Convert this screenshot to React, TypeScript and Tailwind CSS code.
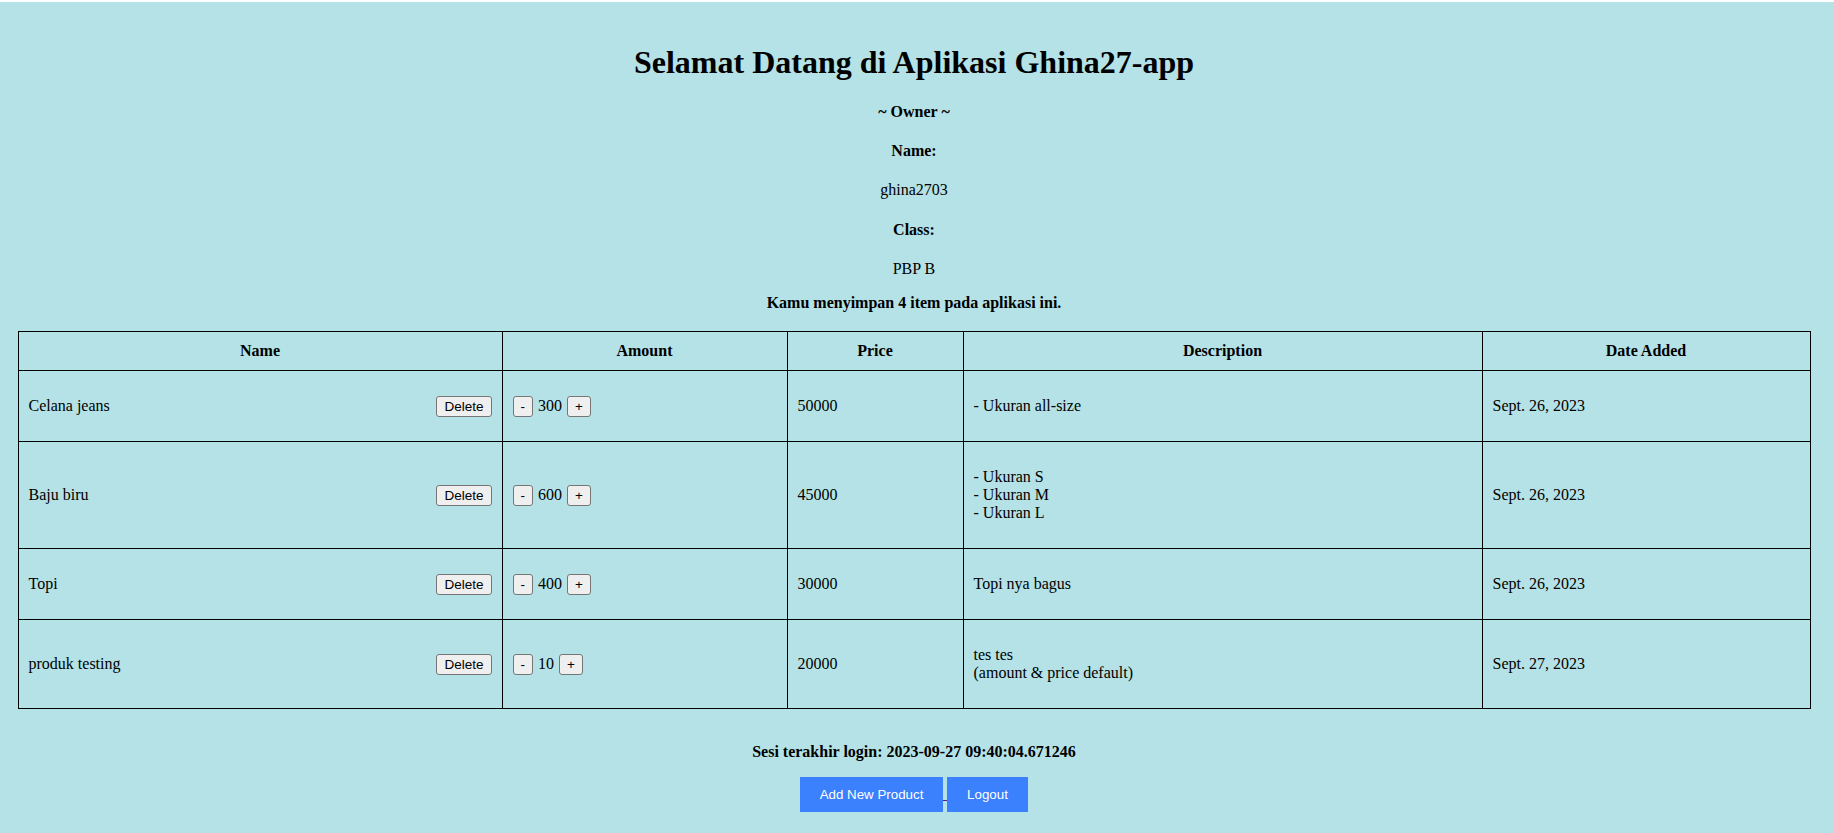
import React from 'react';

type Item = {
	name: string;
	amount: number;
	price: number;
	description: string[];
	dateAdded: string;
};

const items: Item[] = [
	{
		name: 'Celana jeans',
		amount: 300,
		price: 50000,
		description: ['- Ukuran all-size'],
		dateAdded: 'Sept. 26, 2023',
	},
	{
		name: 'Baju biru',
		amount: 600,
		price: 45000,
		description: ['- Ukuran S', '- Ukuran M', '- Ukuran L'],
		dateAdded: 'Sept. 26, 2023',
	},
	{
		name: 'Topi',
		amount: 400,
		price: 30000,
		description: ['Topi nya bagus'],
		dateAdded: 'Sept. 26, 2023',
	},
	{
		name: 'produk testing',
		amount: 10,
		price: 20000,
		description: ['tes tes', '(amount & price default)'],
		dateAdded: 'Sept. 27, 2023',
	},
];

const btn =
	"bg-[#efefef] border border-[#767676] rounded-[3px] px-[7px] py-[1px] text-[13.5px] leading-[17px] text-black font-['Liberation_Sans',Arial,sans-serif]";

export default function App() {
	return (
		<div className="min-h-screen w-full border-t-2 border-white bg-[#b4e2e6] text-black font-['Liberation_Serif','Times_New_Roman',serif] text-[16px] leading-[18px]">
			<div className="w-[1828px] pt-[42px] pb-[20px] flex flex-col items-center text-center">
				<h1 className="text-[32px] leading-[37px] font-bold">
					Selamat Datang di Aplikasi Ghina27-app
				</h1>
				<h4 className="mt-[22px] font-bold">~ Owner ~</h4>
				<h4 className="mt-[21px] font-bold">Name:</h4>
				<p className="mt-[21px]">ghina2703</p>
				<h4 className="mt-[22px] font-bold">Class:</h4>
				<p className="mt-[21px]">PBP B</p>
				<h5 className="mt-[16px] font-bold">Kamu menyimpan 4 item pada aplikasi ini.</h5>

				<table className="mt-[19px] w-[1792px] table-fixed border-collapse border border-black text-left">
					<colgroup>
						<col className="w-[484px]" />
						<col className="w-[285px]" />
						<col className="w-[176px]" />
						<col className="w-[519px]" />
						<col className="w-[328px]" />
					</colgroup>
					<thead>
						<tr>
							<th className="border border-black p-[10px] text-center font-bold">Name</th>
							<th className="border border-black p-[10px] text-center font-bold">Amount</th>
							<th className="border border-black p-[10px] text-center font-bold">Price</th>
							<th className="border border-black p-[10px] text-center font-bold">Description</th>
							<th className="border border-black p-[10px] text-center font-bold">Date Added</th>
						</tr>
					</thead>
					<tbody>
						{items.map((item) => (
							<tr key={item.name}>
								<td className="border border-black p-[10px] align-middle">
									<div className="flex items-center justify-between">
										<span>{item.name}</span>
										<button className={btn}>Delete</button>
									</div>
								</td>
								<td className="border border-black p-[10px] align-middle">
									<div className="flex items-center gap-[5px]">
										<button className={btn}>-</button>
										<span>{item.amount}</span>
										<button className={btn}>+</button>
									</div>
								</td>
								<td className="border border-black p-[10px] align-middle">{item.price}</td>
								<td className="border border-black p-[10px] align-middle">
									<p className="my-[16px]">
										{item.description.map((line, i) => (
											<React.Fragment key={i}>
												{i > 0 && <br />}
												{line}
											</React.Fragment>
										))}
									</p>
								</td>
								<td className="border border-black p-[10px] align-middle">{item.dateAdded}</td>
							</tr>
						))}
					</tbody>
				</table>

				<h5 className="mt-[34px] font-bold">
					Sesi terakhir login: 2023-09-27 09:40:04.671246
				</h5>

				<div className="mt-[16px] flex items-end font-['Liberation_Sans',Arial,sans-serif] text-[13.33px] text-white">
					<button className="w-[143px] h-[35px] bg-[#3b80fd] text-white">Add New Product</button>
					<span className="w-[4px] h-px mb-[11px] bg-[#551a8b]" />
					<button className="w-[81px] h-[35px] bg-[#3b80fd] text-white">Logout</button>
				</div>
			</div>
		</div>
	);
}
